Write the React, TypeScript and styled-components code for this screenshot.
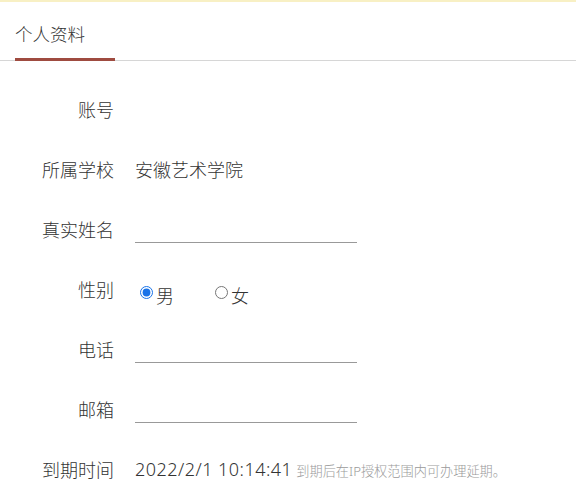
import React from "react";
import styled, { createGlobalStyle } from "styled-components";

const GlobalStyle = createGlobalStyle`
  html, body {
    margin: 0;
    padding: 0;
    background: #fff;
  }
  body {
    font-family: "Noto Sans", "Noto Sans CJK SC", sans-serif;
    font-weight: 300;
    color: #333;
  }
`;

const Page = styled.div`
  width: 576px;
  height: 501px;
  overflow: hidden;
  border-top: 2px solid #f8f0c4;
  box-sizing: border-box;
`;

const TabBar = styled.div`
  display: flex;
  height: 58px;
  padding-left: 15px;
  border-bottom: 1px solid #d6d6d6;
`;

const Tab = styled.div<{ $active?: boolean }>`
  width: 100px;
  display: flex;
  align-items: center;
  font-size: 17.5px;
  color: #333;
  box-sizing: border-box;
  padding-top: 6px;
  border-bottom: 3px solid ${(p) => (p.$active ? "#9f4b40" : "transparent")};
  margin-bottom: -1px;
`;

const Form = styled.div`
  padding-top: 18px;
`;

const Row = styled.div`
  display: grid;
  grid-template-columns: 114px 1fr;
  column-gap: 21px;
  align-items: center;
  height: 60px;
  font-size: 18px;
`;

const Label = styled.div`
  text-align: right;
  color: #333;
`;

const Value = styled.div`
  display: flex;
  align-items: baseline;
  color: #333;
  white-space: nowrap;
`;

const Stamp = styled.span`
  letter-spacing: 0.47px;
`;

const Field = styled.input`
  width: 222px;
  height: 26px;
  margin-top: 0;
  padding: 0;
  border: none;
  border-bottom: 1px solid #999;
  outline: none;
  font: inherit;
  font-size: 16px;
  color: #333;
  background: transparent;
`;

const RadioGroup = styled.div`
  display: flex;
  align-items: center;
  margin-top: 12px;
`;

const RadioOption = styled.label`
  display: flex;
  align-items: center;
  margin-right: 36px;
  font-size: 18px;

  input {
    margin: 0 3px 0 5px;
    width: 13px;
    height: 13px;
    accent-color: #1a73e8;
    position: relative;
    top: -3px;
  }
`;

const Hint = styled.span`
  margin-left: 4px;
  font-size: 13.2px;
  color: #9a9a9a;
`;

export default function App() {
  return (
    <>
      <GlobalStyle />
      <Page>
        <TabBar>
          <Tab $active>个人资料</Tab>
        </TabBar>
        <Form>
          <Row>
            <Label>账号</Label>
            <Value />
          </Row>
          <Row>
            <Label>所属学校</Label>
            <Value>安徽艺术学院</Value>
          </Row>
          <Row>
            <Label>真实姓名</Label>
            <Value>
              <Field type="text" />
            </Value>
          </Row>
          <Row>
            <Label>性别</Label>
            <RadioGroup>
              <RadioOption>
                <input type="radio" name="sex" defaultChecked />男
              </RadioOption>
              <RadioOption>
                <input type="radio" name="sex" />女
              </RadioOption>
            </RadioGroup>
          </Row>
          <Row>
            <Label>电话</Label>
            <Value>
              <Field type="text" />
            </Value>
          </Row>
          <Row>
            <Label>邮箱</Label>
            <Value>
              <Field type="text" />
            </Value>
          </Row>
          <Row>
            <Label>到期时间</Label>
            <Value>
              <Stamp>2022/2/1 10:14:41</Stamp>
              <Hint>到期后在IP授权范围内可办理延期。</Hint>
            </Value>
          </Row>
        </Form>
      </Page>
    </>
  );
}
